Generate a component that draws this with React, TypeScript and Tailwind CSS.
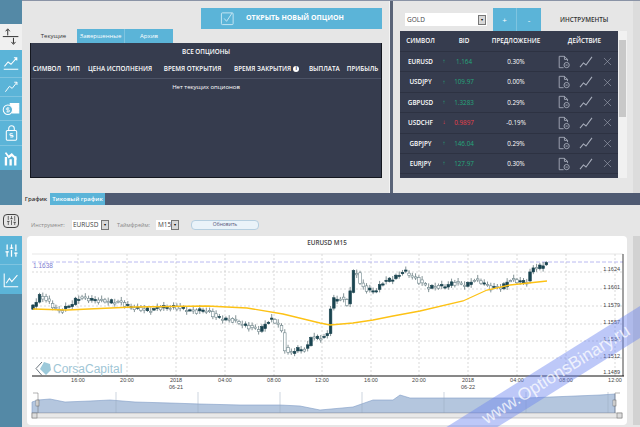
import React from 'react';
import { X, SlidersVertical } from 'lucide-react';

const rows = [
  { sym: 'EURUSD', bid: '1.164', pct: '0.30%', up: true },
  { sym: 'USDJPY', bid: '109.97', pct: '0.00%', up: true },
  { sym: 'GBPUSD', bid: '1.3283', pct: '0.29%', up: true },
  { sym: 'USDCHF', bid: '0.9897', pct: '-0.19%', up: false },
  { sym: 'GBPJPY', bid: '146.04', pct: '0.29%', up: true },
  { sym: 'EURJPY', bid: '127.97', pct: '0.30%', up: true },
];

// price path in page pixels, read off the picture
const pricePath = [
  [33, 305], [40, 296], [46, 300], [55, 308], [60, 312], [70, 305], [78, 298], [90, 299], [100, 301], [117, 302],
  [137, 309], [150, 310], [165, 307], [180, 308], [195, 312], [205, 309], [215, 317], [235, 321], [248, 327], [260, 330],
  [270, 319], [280, 325], [285, 350], [290, 355], [295, 349], [307, 350], [310, 336], [318, 338], [327, 337], [330, 310],
  [332, 300], [340, 298], [348, 305], [353, 273], [356, 267], [358, 283], [367, 290], [377, 290], [383, 282], [400, 275],
  [403, 270], [417, 280], [427, 287], [440, 287], [453, 283], [467, 285], [473, 280], [483, 282], [490, 288], [503, 287],
  [508, 280], [527, 282], [532, 268], [540, 267], [548, 261],
];

const maLine =
  '33,309 67,310 133,307 207,306 247,308 283,314 320,323 330,325 353,323 373,320 393,316 420,311 463,301 487,290 510,285 547,281';

const priceAt = (x: number) => {
  for (let i = 1; i < pricePath.length; i++) {
    const [x0, y0] = pricePath[i - 1];
    const [x1, y1] = pricePath[i];
    if (x <= x1) return y0 + ((y1 - y0) * (x - x0)) / (x1 - x0);
  }
  return 261;
};

const candles = Array.from({ length: 158 }, (_, i) => {
  const x = 33 + i * 3.27;
  const open = priceAt(x - 3.27) + Math.sin(i * 1.1) * 1.6;
  const close = priceAt(x) + Math.sin(i * 2.3) * 2;
  const top = Math.min(open, close);
  const bottom = Math.max(open, close);
  const wick = 1 + Math.abs(Math.sin(i * 1.7)) * 3;
  return { x, top, h: Math.max(bottom - top, 1.2), wTop: top - wick, wBottom: bottom + wick * 0.8, up: close <= open };
});

const gridX = [78, 127, 176, 225, 274, 322, 371, 419, 468, 517, 566, 615];
const gridY = [272, 289, 306, 324, 341, 358];
const timeLabels = ['16:00', '20:00', '2018', '04:00', '08:00', '12:00', '16:00', '20:00', '2018', '04:00', '08:00', '12:00'];
const priceLabels = [
  ['1.1624', 271], ['1.1601', 289], ['1.1579', 307], ['1.1557', 324], ['1.1534', 341], ['1.1512', 358], ['1.1489', 374],
] as const;

const navArea =
  '32,413 32,402 38,400 50,399 65,402 90,401 110,400 135,402 170,403 200,404 240,405 280,405 300,406 320,410 353,407 373,400 393,400 400,395 410,398 470,398 526,398 600,395 615,394 615,413';

const UpDownIcon = () => (
  <svg viewBox="0 0 22 24" className="w-[18px] h-[20px]" fill="none" stroke="#333" strokeWidth="1.2">
    <path d="M1 11.5h19M7 10V3M4.5 5L7 2l2.5 3M14 13v7M11.5 18l2.5 3 2.5-3" />
  </svg>
);

const ChartAxisIcon = () => (
  <svg viewBox="0 0 22 20" className="w-[16px] h-[15px]" fill="none" stroke="#fff" strokeWidth="1.4">
    <path d="M1 18h20M2 14l5-6 4 3 8-9M15 2h4v4" />
  </svg>
);

const TrendIcon = () => (
  <svg viewBox="0 0 22 20" className="w-[15px] h-[14px]" fill="none" stroke="#fff" strokeWidth="1.4">
    <path d="M2 17l6-8 4 3 7-9M15 3h4v4" />
  </svg>
);

const CoinsIcon = () => (
  <svg viewBox="0 0 22 18" className="w-[20px] h-[14px]" fill="none" stroke="#fff" strokeWidth="1.3">
    <path d="M10 2h11v3H10zM12 6.500h9v3h-9zM13 11h8v3h-8z" fill="#fff" />
    <circle cx="7" cy="10" r="6" fill="#5bb4d8" />
    <path d="M9 7.800H6a1 1 0 000 2.400h2a1 1 0 010 2.400H5M7 6.500v7" strokeWidth="1" />
  </svg>
);

const LockIcon = () => (
  <svg viewBox="0 0 16 20" className="w-[13px] h-[16px]" fill="none" stroke="#fff" strokeWidth="1.3">
    <rect x="1.500" y="7" width="13" height="12" rx="1.500" />
    <path d="M4.500 7V4.500a3.500 3.500 0 017 0V7M9.500 11H7a.8.8 0 000 2h2a.8.8 0 010 2H6.500" />
  </svg>
);

const BarsIcon = () => (
  <svg viewBox="0 0 18 18" className="w-[14px] h-[15px]" fill="#fff">
    <path d="M1 18V7h3v11zM7 18V10h3v8zM13 18V6h3v12z" />
    <path d="M1 2l5 7 4-3 6 5V8l-6-6-4 3-3-4z" />
  </svg>
);

const LineChartIcon = () => (
  <svg viewBox="0 0 20 20" className="w-[16px] h-[16px]" fill="none" stroke="#fff" strokeWidth="1.300">
    <path d="M1.500 2v16.500H19M4 14l4-6 3 4 7-8" />
  </svg>
);

const CheckBoxIcon = () => (
  <svg viewBox="0 0 16 16" className="w-[15px] h-[15px]" fill="none" stroke="#c9e8f4" strokeWidth="1">
    <rect x="1.500" y="2" width="12.500" height="12.500" rx="1" />
    <path d="M4.500 8l2.500 3 6-9" />
  </svg>
);

const DocIcon = () => (
  <svg viewBox="0 0 16 16" className="w-[14px] h-[14px]" fill="none" stroke="#a9afbd" strokeWidth="1">
    <path d="M7.500 14.500H2.500v-13h6l3.500 3.500v2" />
    <path d="M8.500 1.500v3.500H12" />
    <circle cx="11" cy="11.500" r="3" />
    <path d="M9.800 11.500h2.400" />
  </svg>
);

const ZigzagIcon = () => (
  <svg viewBox="0 0 16 14" className="w-[14px] h-[12px]" fill="none" stroke="#a9afbd" strokeWidth="1.200">
    <path d="M1 13l4-5 3 2.500L15 1" />
  </svg>
);

const SelectArrow = () => (
  <span className="w-[8px] h-[10px] bg-[#d8d8d8] border border-[#777] flex items-center justify-center text-[4px] text-black shrink-0">
    ▾
  </span>
);

const SideBtn = ({ h, line, children }: { h: string; line?: boolean; children: React.ReactNode }) => (
  <div className={`${h} bg-[#5bb4d8] flex items-center justify-center ${line ? 'border-b border-[#7fc4e0]' : ''}`}>{children}</div>
);

const PriceChart = () => (
  <svg viewBox="27 250 600 175" className="w-[600px] h-[175px] block" style={{ fontFamily: '"Liberation Sans", sans-serif' }}>
    {gridX.map((x) => (
      <line key={x} x1={x} x2={x} y1={254} y2={376} stroke="#c8c8c8" strokeWidth="0.7" strokeDasharray="2 2" />
    ))}
    {gridY.map((y) => (
      <line key={y} x1={32} x2={623} y1={y} y2={y} stroke="#c8c8c8" strokeWidth="0.7" strokeDasharray="2 2" />
    ))}
    <line x1={32} x2={623} y1={254} y2={254} stroke="#dcdcdc" strokeWidth="0.7" />
    <line x1={32} x2={623} y1={262} y2={262} stroke="#a8a8ee" strokeWidth="0.8" strokeDasharray="4 2" />
    <text x={33} y={268} fontSize="6.500" fill="#7c7cd0">1.1638</text>

    {candles.map((c, i) => (
      <g key={i}>
        <line x1={c.x} x2={c.x} y1={c.wTop} y2={c.wBottom} stroke="#30494f" strokeWidth="0.6" />
        <rect
          x={c.x - 1.3}
          y={c.top}
          width={2.6}
          height={c.h}
          fill={c.up ? '#1a4450' : '#fff'}
          stroke={c.up ? '#1a4450' : '#6f868c'}
          strokeWidth="0.6"
        />
      </g>
    ))}
    <polyline points={maLine} fill="none" stroke="#fdc215" strokeWidth="1.300" />

    <line x1={32} x2={624} y1={376} y2={376} stroke="#111" strokeWidth="1" />
    <line x1={623} x2={623} y1={254} y2={376} stroke="#111" strokeWidth="0.8" />
    {priceLabels.map(([label, y]) => (
      <text key={label} x={620} y={y} fontSize="5.500" fill="#444" textAnchor="end">{label}</text>
    ))}
    {timeLabels.map((t, i) => (
      <text key={i} x={gridX[i]} y={382} fontSize="5.500" fill="#444" textAnchor="middle">{t}</text>
    ))}
    <text x={176} y={389} fontSize="5.500" fill="#444" textAnchor="middle">06-21</text>
    <text x={468} y={389} fontSize="5.500" fill="#444" textAnchor="middle">06-22</text>

    {/* logo */}
    <path d="M42 362l-6 6.500 6 7" fill="none" stroke="#6d7780" strokeWidth="1" />
    <path d="M44 362l6 2 1 6-5 5-6-6z" fill="#9cc9da" />
    <text x={53} y={373} fontSize="12" fill="#9fc6d6">CorsaCapital</text>

    {/* navigator */}
    <polygon points={navArea} fill="#b4c6de" stroke="#7f9cc6" strokeWidth="0.6" />
    {[116, 198, 280, 362, 444, 526, 608].map((x) => (
      <line key={x} x1={x} x2={x} y1={392} y2={413} stroke="#9aa9bc" strokeWidth="0.5" />
    ))}
    <rect x={32} y={413} width={590} height={5} fill="#e8e8e8" stroke="#999" strokeWidth="0.5" />
    <rect x={32} y={413} width={5} height={5} fill="#ddd" stroke="#666" strokeWidth="0.5" />
    <rect x={617} y={413} width={5} height={5} fill="#ddd" stroke="#666" strokeWidth="0.5" />
    <rect x={36} y={400} width={3} height={6} fill="#eee" stroke="#666" strokeWidth="0.5" />
    <rect x={613} y={400} width={3} height={6} fill="#eee" stroke="#666" strokeWidth="0.5" />
    <path d="M38 393h-5M38 393v20M615 393h5M615 393v20" fill="none" stroke="#666" strokeWidth="0.5" />
  </svg>
);

export default function App() {
  return (
    <div className="relative w-[640px] h-[427px] overflow-hidden flex bg-[#e6e6e6] font-['Open_Sans',sans-serif]">
      {/* left rail */}
      <div className="w-[22px] shrink-0 flex flex-col bg-[#5489a6]">
        <div className="h-[24px]" />
        <div className="h-[26px] bg-[#f0f0f0] flex items-center justify-center"><UpDownIcon /></div>
        <SideBtn h="h-[28px]" line><ChartAxisIcon /></SideBtn>
        <SideBtn h="h-[19px]" line><TrendIcon /></SideBtn>
        <SideBtn h="h-[24px]" line><CoinsIcon /></SideBtn>
        <SideBtn h="h-[25px]" line><LockIcon /></SideBtn>
        <SideBtn h="h-[24px]"><BarsIcon /></SideBtn>
        <div className="h-[35px]" />
        <div className="h-[31px] bg-[#e6e6e6] flex items-center justify-center">
          <span className="w-[16px] h-[14px] border border-[#444] rounded-sm flex items-center justify-center">
            <SlidersVertical className="w-[11px] h-[11px] text-[#333]" strokeWidth={1.5} />
          </span>
        </div>
        <SideBtn h="h-[29px]" line><SlidersVertical className="w-[15px] h-[15px] text-white" strokeWidth={2} /></SideBtn>
        <SideBtn h="h-[29px]"><LineChartIcon /></SideBtn>
      </div>

      <div className="flex-1 min-w-0 flex flex-col">
        {/* top panels */}
        <div className="h-[193px] flex border-t border-[#8a93a6]">
          <div className="w-[368px] shrink-0 pt-[7px] pl-[8px] border-r border-[#f4f4f4]">
            <div className="flex justify-end pr-[7px]">
              <div className="w-[181px] h-[21px] bg-[#5bb4d8] flex items-center gap-[11px] pl-[19px] text-white text-[7px] font-bold">
                <CheckBoxIcon />
                <span>ОТКРЫТЬ НОВЫЙ ОПЦИОН</span>
              </div>
            </div>
            <div className="flex h-[14px] text-[6px] items-center">
              <div className="w-[47px] text-center text-[#333]">Текущие</div>
              <div className="w-[48px] h-full bg-[#5bb4d8] text-white flex items-center justify-center border-r border-[#7fc4e0]">Завершенные</div>
              <div className="w-[48px] h-full bg-[#5bb4d8] text-white flex items-center justify-center">Архив</div>
            </div>
            <div className="w-[352px] h-[135px] bg-[#363c4e] text-white text-[6.300px] font-semibold border-x border-b border-[#14171f]">
              <div className="h-[17px] pt-[1px] flex items-center justify-center">ВСЕ ОПЦИОНЫ</div>
              <div className="h-[19px] flex items-center border-b border-[#4c5366] whitespace-nowrap">
                <div className="w-[32px] text-center">СИМВОЛ</div>
                <div className="w-[21px] text-center">ТИП</div>
                <div className="w-[73px] text-center">ЦЕНА ИСПОЛНЕНИЯ</div>
                <div className="w-[73px] text-center">ВРЕМЯ ОТКРЫТИЯ</div>
                <div className="w-[76px] flex items-center justify-center gap-[2px]">
                  ВРЕМЯ ЗАКРЫТИЯ
                  <span className="w-[6px] h-[6px] rounded-full bg-white text-[#363c4e] text-[5px] font-bold flex items-center justify-center">i</span>
                </div>
                <div className="w-[40px] text-center">ВЫПЛАТА</div>
                <div className="w-[37px] text-center">ПРИБЫЛЬ</div>
              </div>
              <div className="pt-[4px] text-center font-normal text-[6px]">Нет текущих опционов</div>
            </div>
          </div>

          <div className="w-[3px] shrink-0 bg-[#5a6478]" />

          <div className="w-[240px] shrink-0 pt-[7px] pl-[7px]">
            <div className="flex h-[23px] items-center">
              <div className="ml-[5px] w-[82px] h-[13px] bg-white flex items-center justify-between pl-[2px] pr-[1px] text-[6.500px] text-[#444]">
                GOLD
                <SelectArrow />
              </div>
              <div className="ml-[6px] w-[24px] h-full bg-[#5bb4d8] text-white text-[8px] flex items-center justify-center border-r border-[#7fc4e0]">+</div>
              <div className="w-[24px] h-full bg-[#5bb4d8] text-white text-[8px] flex items-center justify-center">-</div>
              <div className="ml-[19px] text-[6.300px] font-semibold text-[#333]">ИНСТРУМЕНТЫ</div>
            </div>
            <div className="flex">
              <div className="w-[218px] h-[147px] overflow-hidden bg-[#363c4e] text-white text-[6.300px] font-semibold">
                <div className="h-[21px] flex items-center border-b border-[#2d3242]">
                  <div className="w-[41px] text-center">СИМВОЛ</div>
                  <div className="w-[6px]" />
                  <div className="w-[34px] text-center">BID</div>
                  <div className="w-[70px] text-center">ПРЕДЛОЖЕНИЕ</div>
                  <div className="w-[67px] text-center">ДЕЙСТВИЕ</div>
                </div>
                {rows.map((r) => (
                  <div key={r.sym} className="h-[20.400px] flex items-center border-b border-[#2d3242]">
                    <div className="w-[41px] text-center">{r.sym}</div>
                    <div className={`w-[6px] text-center text-[6px] ${r.up ? 'text-[#25a87c]' : 'text-[#e8404a]'}`}>{r.up ? '↑' : '↓'}</div>
                    <div className={`w-[34px] text-center font-normal ${r.up ? 'text-[#25a87c]' : 'text-[#e8404a]'}`}>{r.bid}</div>
                    <div className="w-[70px] text-center font-normal">{r.pct}</div>
                    <div className="w-[67px] flex items-center pl-[6px] gap-[8px]">
                      <DocIcon />
                      <ZigzagIcon />
                      <X className="w-[13px] h-[13px] text-[#a9afbd]" strokeWidth={1} />
                    </div>
                  </div>
                ))}
                {/* next row is scrolled away, only its icon top shows */}
                <div className="h-[20.400px] flex items-center pl-[157px]">
                  <DocIcon />
                </div>
              </div>
              <div className="w-[9px] h-[147px] bg-[#f1f1f1] relative">
                <div className="absolute top-[9px] left-[1px] w-[7px] h-[77px] bg-[#c8c8c8]" />
              </div>
            </div>
          </div>

          <div className="flex-1 bg-[#dcdcdc]" />
        </div>

        {/* chart tabs */}
        <div className="h-[12px] bg-[#4f5a72] flex text-[6px] font-semibold">
          <div className="w-[28px] bg-[#e6e6e6] text-[#333] flex items-center justify-center">График</div>
          <div className="w-[55px] bg-[#5bb4d8] text-white flex items-center justify-center">Тиковый график</div>
        </div>

        {/* chart toolbar */}
        <div className="h-[31px] pt-[15px] pl-[9px] flex items-start text-[5.500px] text-[#888]">
          <span className="w-[41px] pt-[1px]">Инструмент:</span>
          <div className="w-[37px] h-[10px] bg-white text-[#444] text-[6.500px] flex items-center justify-between pl-[1px]">EURUSD<SelectArrow /></div>
          <span className="ml-[8px] w-[39px] pt-[1px]">Таймфрейм:</span>
          <div className="w-[23px] h-[10px] bg-white text-[#444] text-[6.500px] flex items-center justify-between pl-[2px]">M15<SelectArrow /></div>
          <button className="ml-[12px] w-[68px] h-[10px] rounded-sm border border-[#b6cfe0] bg-[#eaf3f9] text-[5px] text-[#557] flex items-center justify-center">Обновить</button>
        </div>

        {/* chart card */}
        <div className="flex">
          <div className="ml-[5px] w-[600px] h-[189px] bg-white rounded-[4px] overflow-hidden">
            <div className="h-[14px] flex items-center justify-center text-[6.300px] font-semibold text-[#444]">EURUSD M15</div>
            <PriceChart />
          </div>
          <div className="ml-[6px] w-[7px] h-[189px] bg-[#d2d2d2]" />
        </div>
      </div>

      {/* site watermark */}
      <div className="absolute left-[421px] top-[361px] w-[270px] h-[27px] -rotate-[32deg] bg-[#6d86f0]/45 flex items-center justify-center text-white/75 text-[17.500px] font-['Liberation_Sans',sans-serif]">
        www.OptionsBinary.ru
      </div>
    </div>
  );
}
